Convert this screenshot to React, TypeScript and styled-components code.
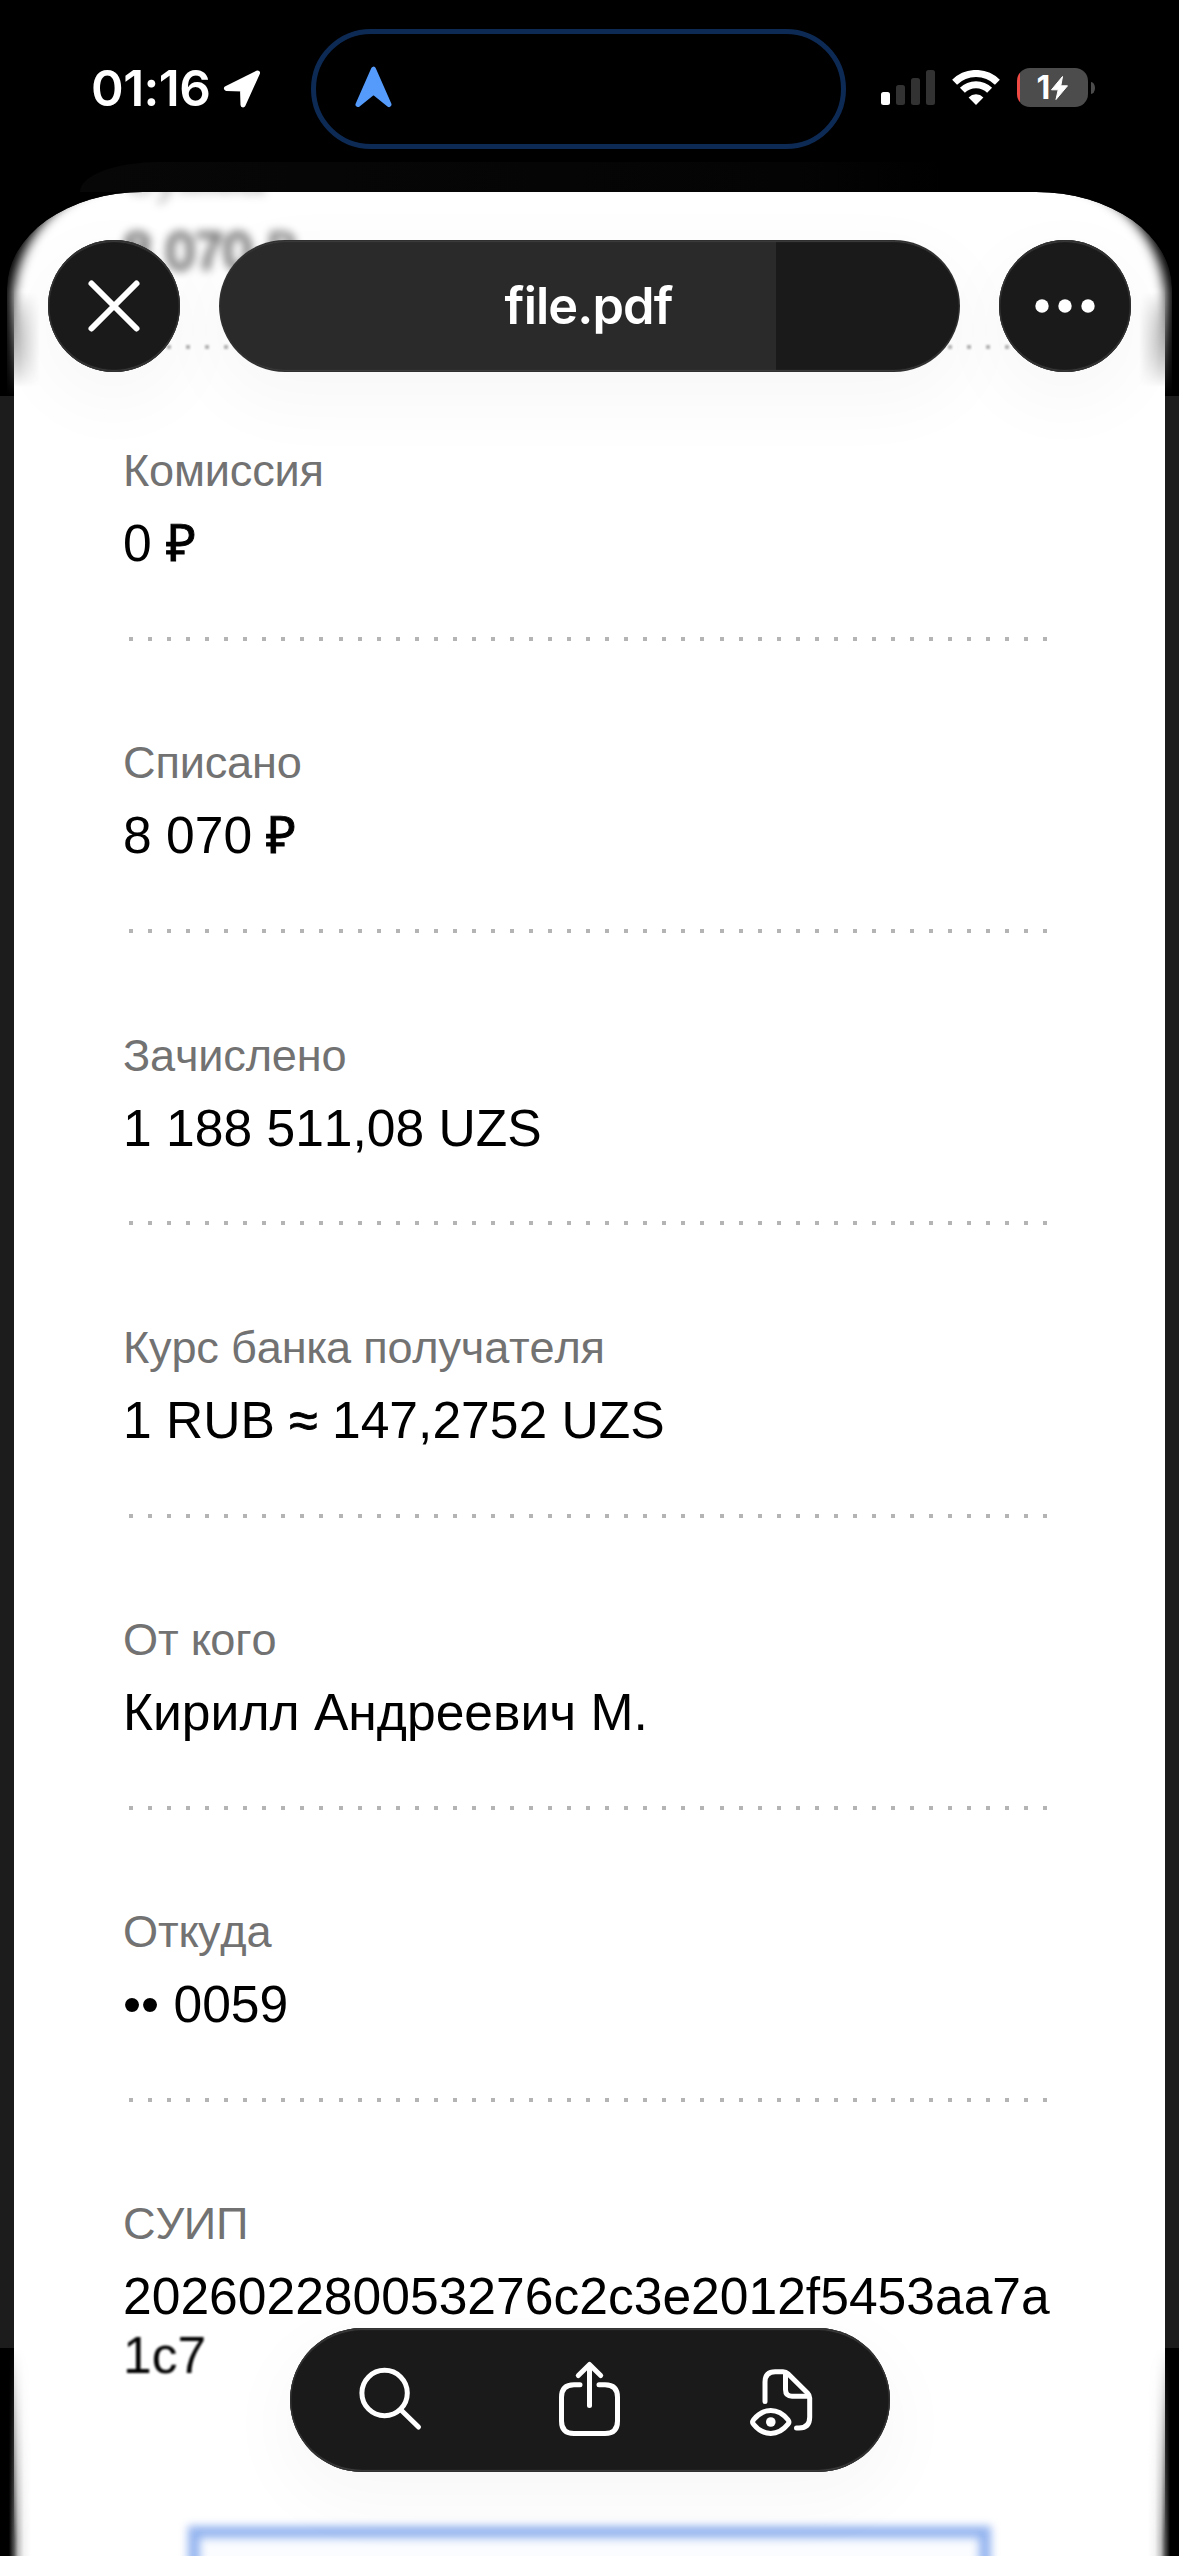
import React from "react";
import styled, { createGlobalStyle, css } from "styled-components";

const GlobalStyle = createGlobalStyle`
  html, body { margin: 0; padding: 0; background: #000; }
  * { box-sizing: border-box; }
`;

const Screen = styled.div`
  position: relative;
  width: 1179px;
  height: 2556px;
  overflow: hidden;
  background: #000;
  display: flex;
  flex-direction: column;
`;

const StatusBar = styled.header`
  height: 162px;
  flex: none;
  display: flex;
  align-items: flex-start;
`;

const Clock = styled.div`
  display: flex;
  align-items: center;
  gap: 13px;
  width: 311px;
  flex: none;
  padding-left: 91px;
  height: 177px;
`;

const Time = styled.span`
  font: 600 49.5px/60px Inter, "Liberation Sans", sans-serif;
  letter-spacing: -0.5px;
  color: #fff;
  width: 119px;
  flex: none;
  margin-bottom: 2px;
  white-space: nowrap;
`;

const Island = styled.div`
  width: 535px;
  height: 120px;
  margin-top: 29px;
  border: 5px solid #0d2a55;
  border-radius: 60px;
  padding: 32px 39px;
`;

const StatusIcons = styled.div`
  display: flex;
  align-items: center;
  height: 175px;
  padding-left: 35px;
  gap: 17px;
`;

const Battery = styled.div`
  display: flex;
  align-items: center;
  gap: 3px;
`;

const BatteryBody = styled.div`
  display: flex;
  align-items: center;
  justify-content: center;
  gap: 1px;
  width: 71px;
  height: 39px;
  border-radius: 13px;
  background: linear-gradient(90deg, #f04a45 3px, #4c4c4c 3px);
  color: #fff;
  font: 700 32px/39px Inter, "Liberation Sans", sans-serif;

  > svg { flex: none; }
`;

const BatteryTip = styled.div`
  width: 4px;
  height: 12px;
  border-radius: 0 4px 4px 0 / 0 6px 6px 0;
  background: #4c4c4c;
`;

const BackCard = styled.div`
  height: 30px;
  flex: none;
  margin: 0 80px;
  border-radius: 80px 80px 0 0 / 30px 30px 0 0;
  background: linear-gradient(90deg, #070707, #040404 70%, #000 85%);
`;

const Stage = styled.main`
  position: relative;
  flex: 1;
  background: linear-gradient(#000 204px, #1c1c1c 204px, #1c1c1c 2156px, #000 2156px);
  padding: 0 14px;
`;

const HeadGlow = styled.div`
  position: absolute;
  inset: 0 7px auto;
  height: 240px;
  overflow: hidden;
  border-radius: 136px 136px 0 0 / 96px 96px 0 0;
  background: #000;
  -webkit-mask-image: linear-gradient(#000 100px, transparent 204px);
  mask-image: linear-gradient(#000 100px, transparent 204px);

  &::before {
    content: "";
    position: absolute;
    inset: -12px 6px -40px;
    background: #fff;
    border-radius: 124px 124px 0 0;
    filter: blur(6px);
  }
`;

const Sheet = styled.article`
  position: relative;
  height: 100%;
  overflow: hidden;
  padding: 0 109px 0 109px;

  &::before {
    content: "";
    position: absolute;
    inset: 0;
    background: #fff;
    --fade-down: linear-gradient(transparent 90px, #000 195px);
    --core: linear-gradient(90deg, transparent 6px, #000 26px, #000 calc(100% - 26px), transparent calc(100% - 6px)) 0 96px no-repeat;
    -webkit-mask: var(--fade-down), var(--core);
    mask: var(--fade-down), var(--core);
  }
`;

const FootShade = styled.div<{ $side: "left" | "right" }>`
  position: absolute;
  bottom: 0;
  ${(p) => p.$side}: 0;
  width: 34px;
  height: 208px;
  background: linear-gradient(
    to ${(p) => (p.$side === "left" ? "right" : "left")},
    #000 9px, #555 14px, #bbb 18px, #f3f3f3 24px, #fff 31px
  );
  -webkit-mask-image: linear-gradient(transparent, #000 190px);
  mask-image: linear-gradient(transparent, #000 190px);
`;

const Fields = styled.dl`
  position: relative;
  margin: -39px 0 0;
  font-family: "Liberation Sans", Arial, sans-serif;
  font-kerning: none;
`;

const Field = styled.div<{ $hazy?: boolean }>`
  height: 292.2px;
  ${(p) =>
    p.$hazy &&
    css`
      > dt, > dd { filter: blur(5px); opacity: 0.62; }
      > dd { -webkit-text-stroke: 2px; }
      > hr { filter: blur(1px); }
    `}
`;

const Label = styled.dt`
  margin: 0 0 17px;
  font-size: 45.15px;
  line-height: 52px;
  letter-spacing: -0.2px;
  color: #727272;
  white-space: nowrap;
`;

const Value = styled.dd`
  margin: 0;
  font-size: 51.6px;
  line-height: 58.9px;
  color: #000;
  white-space: nowrap;
`;

const Line = styled.span<{ $soft?: boolean }>`
  display: block;
  ${(p) => p.$soft && "filter: blur(1px);"}
`;

const Sign = styled.span`
  -webkit-text-stroke: 0.9px currentColor;
`;

const Dots = styled.hr`
  margin: 64px 0 0 6.4px;
  border: 0;
  width: 919px;
  height: 4px;
  background: repeating-linear-gradient(90deg, #b4b4b4 0 4px, transparent 4px 19.05px);
`;

const Stamp = styled.div`
  position: absolute;
  left: 174px;
  top: 2334px;
  width: 803px;
  height: 90px;
  border: 12px solid #94b4ef;
  background: #fafcff;
  filter: blur(4px);
`;

const TopBar = styled.nav`
  position: absolute;
  top: 240px;
  left: 48px;
  right: 48px;
  display: flex;
  justify-content: space-between;
`;

const glass = css`
  border: 0;
  background-color: #1a1a1a;
  color: #fff;
  box-shadow: inset 0 0 0 1.5px #303030, inset 0 2px 1px #484848, inset 0 -2px 1px #484848,
    0 24px 70px 10px rgba(0, 0, 0, 0.03);
`;

const RoundButton = styled.button`
  ${glass}
  width: 132px;
  height: 132px;
  padding: 0;
  border-radius: 50%;
  display: grid;
  place-items: center;
`;

const TitlePill = styled.div`
  ${glass}
  width: 741px;
  height: 132px;
  border-radius: 66px;
  background-image: linear-gradient(90deg, #2a2a2a 557px, transparent 557px);
  display: flex;
  align-items: center;
  justify-content: center;
  padding-right: 2px;
  font: 600 50.5px/60px Inter, "Liberation Sans", sans-serif;
  letter-spacing: -0.9px;
`;

const BottomBar = styled.nav`
  ${glass}
  position: absolute;
  left: 290px;
  top: 2328px;
  width: 600px;
  height: 144px;
  border-radius: 72px;
  display: flex;
  align-items: center;
  justify-content: space-between;
  padding: 0 64px;
`;

const ToolButton = styled.button`
  border: 0;
  padding: 0;
  background: none;
  color: #fff;
  width: 80px;
  height: 90px;
  display: grid;
  place-items: center;
`;

const StrokeIcon = styled.svg<{ $weight?: number }>`
  display: block;
  overflow: visible;
  fill: none;
  stroke: currentColor;
  stroke-width: ${(p) => p.$weight ?? 5};
  stroke-linecap: round;
  stroke-linejoin: round;
`;

const fields = [
  { label: "Сумма", value: ["8 070 ₽"], hazy: true },
  { label: "Комиссия", value: ["0 ₽"] },
  { label: "Списано", value: ["8 070 ₽"] },
  { label: "Зачислено", value: ["1 188 511,08 UZS"] },
  { label: "Курс банка получателя", value: ["1 RUB ≈ 147,2752 UZS"] },
  { label: "От кого", value: ["Кирилл Андреевич М."] },
  { label: "Откуда", value: ["•• 0059"] },
  { label: "СУИП", value: ["202602280053276c2c3e2012f5453aa7a", "1c7"], last: true },
];

/* The rouble and approximation signs are set heavier than the figures. */
const withSigns = (text: string) =>
  text.split(/([₽≈])/).map((part, i) => (i % 2 ? <Sign key={i}>{part}</Sign> : part));

export default function App() {
  return (
    <>
      <GlobalStyle />
      <Screen>
        <StatusBar>
          <Clock>
            <Time>01:16</Time>
            <svg width="38" height="38" viewBox="0 0 37 38" fill="#fff" stroke="#fff" strokeWidth="5" strokeLinejoin="round">
              <path d="M34 3 L3 18.5 L19 19 L19.5 35 Z" />
            </svg>
          </Clock>
          <Island>
            <svg width="37" height="42" viewBox="0 0 37 42" fill="#559bfb" stroke="#559bfb" strokeWidth="5" strokeLinejoin="round">
              <path d="M18.5 3.2 L3 38.5 L18.5 26 L34 38.5 Z" />
            </svg>
          </Island>
          <StatusIcons>
            <svg width="54" height="35" viewBox="0 0 54 35">
              <rect x="0" y="22" width="9" height="13" rx="2.5" fill="#fff" />
              <rect x="15" y="15" width="9" height="20" rx="2.5" fill="#323232" />
              <rect x="30" y="8" width="9" height="27" rx="2.5" fill="#323232" />
              <rect x="45" y="0" width="9" height="35" rx="2.5" fill="#323232" />
            </svg>
            <svg width="48" height="35" viewBox="0 0 48 35" fill="none" stroke="#fff" strokeWidth="7">
              <path d="M2.6 12.2 A30.5 30.5 0 0 1 45.4 12.2" />
              <path d="M10.4 20.3 A19.3 19.3 0 0 1 37.6 20.3" />
              <path d="M24 35 L16.6 27.4 A10.5 10.5 0 0 1 31.4 27.4 Z" fill="#fff" stroke="none" />
            </svg>
            <Battery>
              <BatteryBody>
                1
                <svg width="17" height="24" viewBox="0 0 17 24" fill="#fff">
                  <path d="M11.500 0.500 L0.500 13.800 H7.200 L5 23.500 L16.500 9.800 H9.800 Z" stroke="#fff" strokeLinejoin="round" />
                </svg>
              </BatteryBody>
              <BatteryTip />
            </Battery>
          </StatusIcons>
        </StatusBar>
        <BackCard />
        <Stage>
          <HeadGlow />
          <Sheet>
            <Fields>
              {fields.map((f) => (
                <Field key={f.label} $hazy={f.hazy}>
                  <Label>{f.label}</Label>
                  <Value>
                    {f.value.map((line, i) => (
                      <Line key={line} $soft={i > 0}>{withSigns(line)}</Line>
                    ))}
                  </Value>
                  {!f.last && <Dots />}
                </Field>
              ))}
            </Fields>
            <Stamp />
          </Sheet>
          <FootShade $side="left" />
          <FootShade $side="right" />
        </Stage>

        <TopBar>
          <RoundButton aria-label="Закрыть">
            <StrokeIcon $weight={6} width="52" height="52" viewBox="0 0 52 52">
              <path d="M3.5 3.5 L48.5 48.5 M48.5 3.5 L3.5 48.5" />
            </StrokeIcon>
          </RoundButton>
          <TitlePill>file.pdf</TitlePill>
          <RoundButton aria-label="Ещё">
            <svg width="60" height="14" viewBox="0 0 60 14" fill="#fff">
              <circle cx="7" cy="7" r="6.7" />
              <circle cx="30" cy="7" r="6.7" />
              <circle cx="53" cy="7" r="6.7" />
            </svg>
          </RoundButton>
        </TopBar>

        <BottomBar>
          <ToolButton aria-label="Поиск">
            <StrokeIcon width="80" height="90" viewBox="354 2355 80 90">
              <circle cx="384.6" cy="2393" r="22.7" />
              <path d="M401 2410 L418.5 2427" />
            </StrokeIcon>
          </ToolButton>
          <ToolButton aria-label="Поделиться">
            <StrokeIcon width="80" height="90" viewBox="550 2355 80 90">
              <path d="M580 2384.700 H574 Q561.500 2384.700 561.500 2397.200 V2421 Q561.500 2433.500 574 2433.500 H605 Q617.500 2433.500 617.500 2421 V2397.200 Q617.500 2384.700 605 2384.700 H599" />
              <path d="M589.500 2405.500 V2365 M578.300 2375.500 L589.500 2364.500 L600.700 2375.500" />
            </StrokeIcon>
          </ToolButton>
          <ToolButton aria-label="Просмотр">
            <StrokeIcon width="80" height="90" viewBox="746 2355 80 90">
              <path d="M765 2401.500 V2382 Q765 2371.700 775.300 2371.700 H783 Q786 2371.700 788 2373.700 L807.500 2393 Q809.700 2395.200 809.700 2398 V2417 Q809.700 2428 799 2428 H796.500" />
              <path d="M785.500 2373 V2389.500 Q785.500 2396.200 792 2396.200 H808.500" />
              <path d="M753.500 2419.800 Q761 2410.500 770.800 2410.500 Q780.500 2410.500 788 2419.800 Q789.800 2422 788 2424.200 Q780.500 2433.500 770.800 2433.500 Q761 2433.500 753.500 2424.200 Q751.700 2422 753.500 2419.800 Z" />
              <circle cx="770.8" cy="2422" r="4.8" fill="currentColor" stroke="none" />
            </StrokeIcon>
          </ToolButton>
        </BottomBar>
      </Screen>
    </>
  );
}
